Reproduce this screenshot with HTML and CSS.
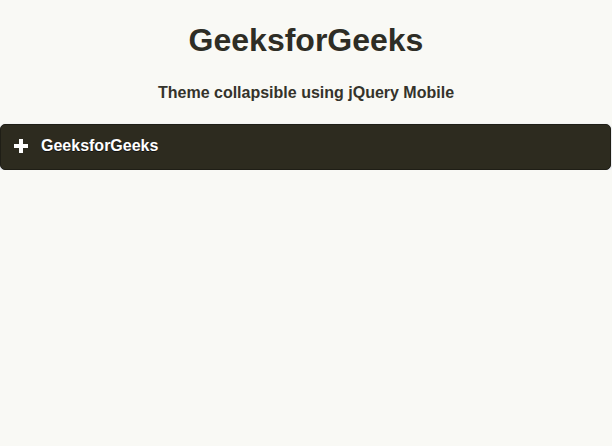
FILE: index.html
```html
<!DOCTYPE html>
<html lang="en">
<head>
<meta charset="utf-8">
<title>Theme collapsible using jQuery Mobile</title>
<link rel="stylesheet" href="styles.css">
</head>
<body>
  <div class="page">
    <h1 class="title">GeeksforGeeks</h1>
    <h3 class="subtitle">Theme collapsible using jQuery Mobile</h3>
    <div class="collapsible">
      <div class="collapsible-heading">
        <span class="icon" aria-hidden="true">
          <svg width="14" height="14" viewBox="0 0 14 14"><path d="M5 0h4v5h5v4H9v5H5V9H0V5h5z" fill="#fff"/></svg>
        </span>
        <span class="heading-text">GeeksforGeeks</span>
      </div>
    </div>
  </div>
</body>
</html>
```
FILE: styles.css
```css
html, body {
  margin: 0;
  padding: 0;
  background: #f9f9f5;
}
body {
  font-family: "Liberation Sans", Arial, sans-serif;
  color: #333;
}
.page {
  display: flex;
  flex-direction: column;
}
.title {
  margin: 22px 0 0;
  font-size: 32px;
  line-height: 37px;
  font-weight: bold;
  text-align: center;
  color: #2e2d25;
}
.subtitle {
  margin: 25px 0 0;
  font-size: 16px;
  line-height: 18px;
  font-weight: bold;
  text-align: center;
  color: #34332b;
}
.collapsible {
  margin: 22px 1px 0 0;
}
.collapsible-heading {
  display: flex;
  align-items: center;
  gap: 13px;
  padding: 11px 14px 13px 13px;
  line-height: 20px;
  background: #2d2b1f;
  border: 1px solid #1f1e16;
  border-radius: 5px;
  box-shadow: 0 1px 3px rgba(40, 60, 160, 0.18);
  color: #fff;
  font-size: 16px;
  font-weight: bold;
  text-shadow: 0 1px 0 #111;
}
.icon {
  display: flex;
  width: 14px;
  height: 14px;
}
```
